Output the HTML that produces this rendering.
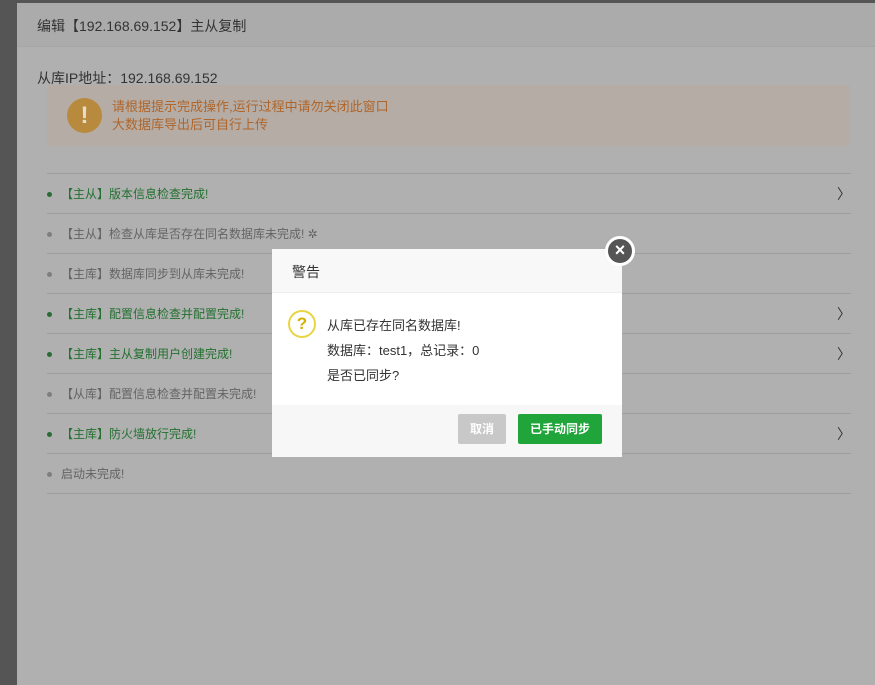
<!DOCTYPE html>
<html><head><meta charset="utf-8"><style>
*{margin:0;padding:0;box-sizing:border-box}
body{width:875px;height:685px;overflow:hidden;background:#555;font-family:"Liberation Sans","Noto Sans CJK SC",sans-serif;position:relative}
.panel{position:absolute;left:17px;top:3px;width:858px;height:682px;background:#b0b0b0}
.hdr{position:absolute;left:0;top:0;width:100%;height:44px;background:#ababab;border-bottom:1px solid #a6a6a6}
.hdr span{position:absolute;left:20px;top:13px;font-size:14px;color:#333}
.ip{position:absolute;left:20px;top:65px;font-size:14px;color:#333}
.warn{position:absolute;left:30px;top:82px;width:803px;height:61px;background:#b5ada5}
.warn .ic{position:absolute;left:20px;top:13px;width:35px;height:35px;border-radius:50%;background:#b78a3d;color:#e8dccc;font-weight:bold;font-size:24px;text-align:center;line-height:35px}
.warn .t{position:absolute;left:65px;top:13px;font-size:13px;line-height:18px;color:#b0652a}
.row{position:absolute;left:30px;width:804px;height:40px;border-top:1px solid #9e9e9e;font-size:12px;line-height:40px;padding-left:14px;color:#646464}
.row:before{content:"";position:absolute;left:0;top:18px;width:5px;height:5px;border-radius:50%;background:#7e7e7e}
.row.g{color:#237030}.row.g:before{background:#2a6d34}
.row .ar{position:absolute;right:0;top:0;color:#333;font-size:14px}
.line{position:absolute;left:30px;width:804px;top:490px;border-top:1px solid #9e9e9e}
.dlg{position:absolute;left:272px;top:249px;width:350px;height:208px;background:#fff}
.dlg .h{height:44px;border-bottom:1px solid #eee;background:#f8f8f8;font-size:14px;color:#333;padding:13px 0 0 20px}
.dlg .b{height:112px;position:relative}
.dlg .q{position:absolute;left:16px;top:17px;width:28px;height:28px;border-radius:50%;border:2px solid #e8d542;color:#d4b000;font-weight:bold;font-size:17px;text-align:center;line-height:24px}
.dlg .m{position:absolute;left:55px;top:20px;font-size:13px;line-height:25px;color:#333}
.dlg .f{height:52px;background:#f7f7f7;position:relative}
.btn{position:absolute;top:9px;height:30px;line-height:30px;font-size:12px;color:#fff;text-align:center;font-weight:bold;border-radius:2px}
.close{position:absolute;left:605px;top:236px;width:30px;height:30px;border-radius:50%;background:#555;border:3px solid #fff;color:#fff;text-align:center;line-height:23px;font-size:18px;font-weight:bold}
</style></head><body>
<div class="panel">
<div class="hdr"><span>编辑【192.168.69.152】主从复制</span></div>
<div class="ip">从库IP地址：192.168.69.152</div>
<div class="warn"><div class="ic">!</div><div class="t">请根据提示完成操作,运行过程中请勿关闭此窗口<br>大数据库导出后可自行上传</div></div>
<div class="row g" style="top:170px">【主从】版本信息检查完成!<span class="ar">〉</span></div>
<div class="row" style="top:210px">【主从】检查从库是否存在同名数据库未完成! ✲</div>
<div class="row" style="top:250px">【主库】数据库同步到从库未完成!</div>
<div class="row g" style="top:290px">【主库】配置信息检查并配置完成!<span class="ar">〉</span></div>
<div class="row g" style="top:330px">【主库】主从复制用户创建完成!<span class="ar">〉</span></div>
<div class="row" style="top:370px">【从库】配置信息检查并配置未完成!</div>
<div class="row g" style="top:410px">【主库】防火墙放行完成!<span class="ar">〉</span></div>
<div class="row" style="top:450px">启动未完成!</div>
<div class="line"></div>
</div>
<div class="dlg">
<div class="h">警告</div>
<div class="b"><div class="q">?</div><div class="m">从库已存在同名数据库!<br>数据库：test1，总记录：0<br>是否已同步?</div></div>
<div class="f"><div class="btn" style="left:186px;width:48px;background:#c8c8c8">取消</div><div class="btn" style="left:246px;width:84px;background:#20a53a">已手动同步</div></div>
</div>
<div class="close">×</div>
</body></html>
